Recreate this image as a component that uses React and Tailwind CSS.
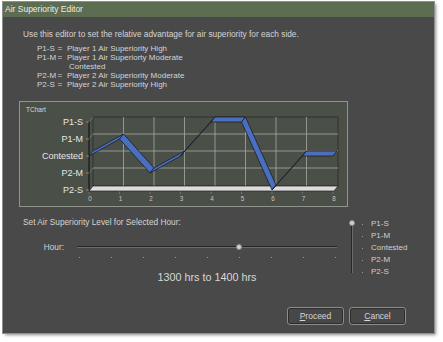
import React from "react";

const levels = [2, 3, 1, 2, 4, 4, 0, 2, 2];
const X0 = 89;
const DX = 30.5;
const yOf = (l) => 191 - 17 * l;
const D = [4, -5];

function Chart() {
  const ylabels = ["P2-S", "P2-M", "Contested", "P1-M", "P1-S"];
  const segs = [];
  for (let i = 0; i < levels.length - 1; i++) {
    const x1 = X0 + DX * i;
    const y1 = yOf(levels[i]);
    const x2 = X0 + DX * (i + 1);
    const y2 = yOf(levels[i + 1]);
    segs.push(
      <polygon
        key={i}
        points={`${x1},${y1} ${x2},${y2} ${x2 + D[0]},${y2 + D[1]} ${x1 + D[0]},${y1 + D[1]}`}
        fill="#4a6fc0"
        stroke="#151515"
        strokeWidth="0.7"
        strokeLinejoin="round"
      />
    );
  }
  return (
    <svg width="327" height="104" viewBox="20 103 327 104" className="block">
      <text x="26" y="113" fontSize="6.5" fill="#d8d8d8" fontFamily="Liberation Sans, Arial, sans-serif">TChart</text>
      <rect x="93" y="118" width="245" height="69" fill="#4a4f48" stroke="#2a2a2a" strokeWidth="0.8" />
      {[1, 2, 3, 4, 5, 6, 7].map((i) => (
        <line key={"v" + i} x1={93 + DX * i} y1="118" x2={93 + DX * i} y2="187" stroke="#a6aaa3" strokeWidth="0.8" />
      ))}
      {[1, 2, 3].map((l) => (
        <line key={"h" + l} x1="93" y1={yOf(l) - 5} x2="338" y2={yOf(l) - 5} stroke="#a6aaa3" strokeWidth="0.8" />
      ))}
      {[1, 2, 3, 4].map((l) => (
        <line key={"lw" + l} x1="89" y1={yOf(l)} x2="93" y2={yOf(l) - 5} stroke="#8a8e87" strokeWidth="0.6" />
      ))}
      <polygon points="89,192 334,192 338,187 93,187" fill="#dcdcdc" stroke="#222" strokeWidth="0.7" />
      <line x1="89" y1="122" x2="89" y2="192.5" stroke="#111" strokeWidth="1.1" />
      {[0, 1, 2, 3, 4].map((l) => (
        <line key={"t" + l} x1="86" y1={yOf(l)} x2="89" y2={yOf(l)} stroke="#9a9a9a" strokeWidth="0.8" />
      ))}
      {ylabels.map((t, l) => (
        <text key={t} x="83" y={yOf(l) + 3.2} fontSize="9" textAnchor="end" fill="#e6e6e6" fontFamily="Liberation Sans, Arial, sans-serif">
          {t}
        </text>
      ))}
      {levels.map((_, i) => (
        <g key={"x" + i}>
          <line x1={X0 + DX * i} y1="192.5" x2={X0 + DX * i} y2="195" stroke="#8a8a8a" strokeWidth="0.6" />
          <text x={X0 + DX * i + 1} y="202.3" fontSize="6.3" textAnchor="middle" fill="#c4c4c4" fontFamily="Liberation Sans, Arial, sans-serif">
            {i}
          </text>
        </g>
      ))}
      {segs}
    </svg>
  );
}

function Button({ first, rest }) {
  return (
    <div className="w-[57px] h-[18px] rounded-[3px] border border-[#8c8c8c] bg-[#474747] shadow-[inset_0_0_0_1px_#2e2e2e] flex items-center justify-center text-[8.5px] text-[#d6d6d6]">
      <span>
        <span className="underline underline-offset-1">{first}</span>
        {rest}
      </span>
    </div>
  );
}

export default function App() {
  const legend = [
    ["P1-S", "=", "Player 1 Air Superiority High"],
    ["P1-M", "=", "Player 1 Air Superiorty Moderate"],
    ["", "", "Contested"],
    ["P2-M", "=", "Player 2 Air Superiority Moderate"],
    ["P2-S", "=", "Player 2 Air Superiority High"],
  ];
  const right = ["P1-S", "P1-M", "Contested", "P2-M", "P2-S"];
  return (
    <div
      className="w-[443px] h-[342px] bg-white overflow-hidden"
      style={{ fontFamily: '"Liberation Sans", Arial, sans-serif' }}
    >
      <div className="ml-[3px] mt-[2px] w-[431px] h-[331px] bg-[#494949] flex flex-col shadow-[0_0_0_1px_#8e8e8e,2px_2px_3px_rgba(0,0,0,0.45)]">
        <div className="h-[15px] bg-[#5d6d51] text-[#ececec] text-[8.5px] pl-[2px] flex items-center shrink-0">
          Air Superiority Editor
        </div>
        <div className="pl-[20px] pt-[13px] text-[#d4d4d4] text-[8.3px] leading-[9px]">
          <div className="whitespace-nowrap">Use this editor to set the relative advantage for air superiority for each side.</div>
          <div className="mt-[5px] ml-[14px] flex flex-col text-[8px]">
            {legend.map((r, i) => (
              <div key={i} className="flex h-[9px] whitespace-nowrap">
                <span className="w-[20.5px] shrink-0">{r[0]}</span>
                <span className="w-[9.5px] shrink-0">{r[1]}</span>
                <span className={i === 2 ? "ml-[2px]" : ""}>{r[2]}</span>
              </div>
            ))}
          </div>
        </div>
        <div className="mt-[12px] ml-[16px] w-[329px] h-[106px] border border-[#8f948c] bg-[#4a4f48]">
          <Chart />
        </div>
        <div className="mt-[11px] flex">
          <div className="ml-[20px] w-[326px] flex flex-col text-[8.3px] leading-[9px] text-[#d4d4d4]">
            <div className="whitespace-nowrap">Set Air Superiority Level for Selected Hour:</div>
            <div className="mt-[15px] flex items-center h-[10px]">
              <div className="w-[41px] text-right">Hour:</div>
              <div className="ml-[13px] w-[260px] relative h-[3px]">
                <div className="h-[2px] border-t border-[#262626] border-b border-b-[#6c6c6c]" />
                <div className="absolute left-[159px] top-[-2px] w-[6px] h-[6px] rounded-full bg-[#d2d2d2] border border-[#8a8a8a]" />
              </div>
            </div>
            <div className="mt-[5px] ml-[55.5px] w-[257px] flex justify-between">
              {Array.from({ length: 9 }).map((_, i) => (
                <div key={i} className="w-[1px] h-[1px] bg-[#9a9a9a]" />
              ))}
            </div>
            <div className="mt-[12px] ml-[54px] w-[260px] text-center text-[10.8px] leading-[14px] text-[#d8d8d8]">
              1300 hrs to 1400 hrs
            </div>
          </div>
          <div className="ml-[2px] flex text-[8px] text-[#d0d0d0]">
            <div className="relative mt-[5px] w-[2px] h-[50px] border-l border-[#262626] border-r border-r-[#6c6c6c]">
              <div className="absolute left-[-3px] top-[-3px] w-[6px] h-[6px] rounded-full bg-[#d2d2d2] border border-[#8a8a8a]" />
            </div>
            <div className="ml-[8.5px] flex flex-col">
              {right.map((t) => (
                <div key={t} className="h-[12px] leading-[12px] flex items-center">
                  <div className="w-[1px] h-[1px] bg-[#9a9a9a]" />
                  <span className="ml-[8.5px]">{t}</span>
                </div>
              ))}
            </div>
          </div>
        </div>
        <div className="mt-[23px] flex justify-end gap-[5px] pr-[28px]">
          <Button first="P" rest="roceed" />
          <Button first="C" rest="ancel" />
        </div>
      </div>
    </div>
  );
}
